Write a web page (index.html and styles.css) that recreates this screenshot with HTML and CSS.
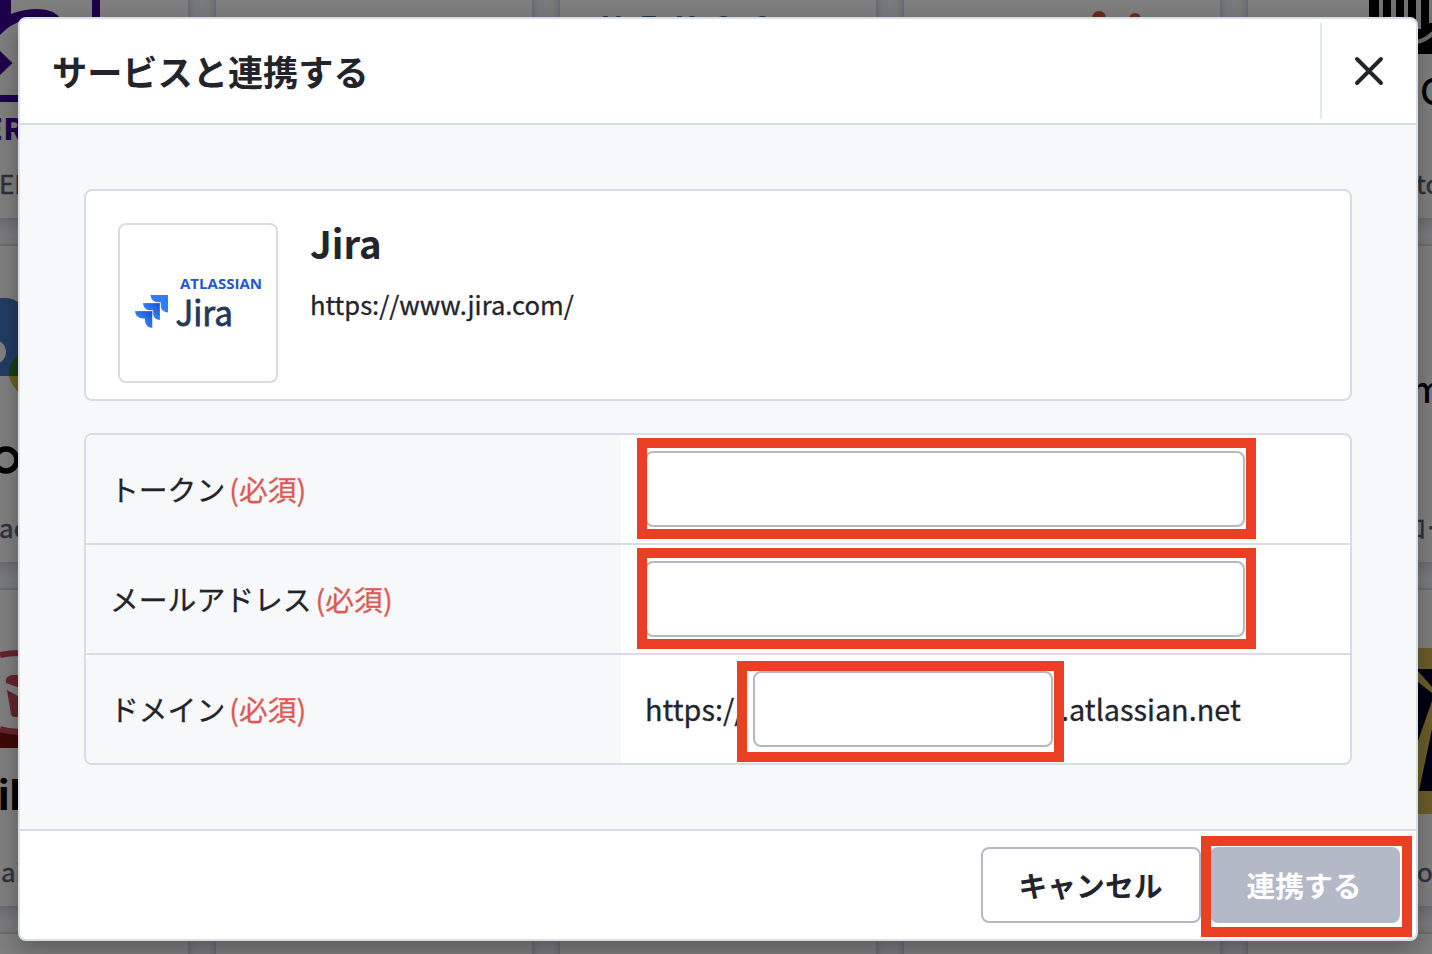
FILE: index.html
```html
<!DOCTYPE html>
<html lang="ja">
<head>
<meta charset="utf-8">
<title>サービスと連携する</title>
<link rel="stylesheet" href="styles.css">
</head>
<body>
<div class="catalog">
  <div class="catalog-grid">
    <div class="card"></div><div class="card"></div><div class="card"></div><div class="card"></div><div class="card"></div>
    <div class="card"></div><div class="card"></div><div class="card"></div><div class="card"></div><div class="card"></div>
    <div class="card"></div><div class="card"></div><div class="card"></div><div class="card"></div><div class="card"></div>
    <div class="card"></div><div class="card"></div><div class="card"></div><div class="card"></div><div class="card"></div>
  </div>
  <svg class="catalog-art" width="1432" height="954" viewBox="0 0 1432 954">
    <g fill="#3c0096">
      <path d="M92 0h8v20h-8zM0 95h20v7H0zM0 0h11v14Q24 9 38 9Q54 9 62 20H24Q10 24 0 35zM0 51L12.500 63L0 75z"/>
      <text x="-16" y="140" font-size="30" font-weight="800" letter-spacing="2" class="latin">ER</text>
    </g>
    <text x="-1" y="194" font-size="26" class="caption">EF</text>
    <path d="M-20 298H6q8 0 14 6v72H-20z" fill="#4479c5"/>
    <circle cx="-6" cy="352" r="12" fill="#fff"/>
    <path d="M20 354Q9 360 9 376h11z" fill="#2c7c35"/>
    <path d="M9 376h11v18Q11 385 9 376z" fill="#d9bd3c"/>
    <circle cx="6" cy="460" r="11" fill="none" stroke="#000" stroke-width="5.500"/>
    <text x="-1" y="538" font-size="26" class="caption">ac</text>
    <path d="M0 729q11 3 20 4v15H0z" fill="#771407"/>
    <path d="M0 655q9-2 20-2M0 729q10 3 20 3" stroke="#c94858" stroke-width="6" fill="none"/>
    <path d="M20 675h-8q-8 2-6 8l14 5zM7 690l13 7v20h-5q-3 0-4-3z" fill="#c94858"/>
    <text x="-2" y="810" font-size="42" font-weight="700" class="latin">il</text>
    <text x="1" y="882" font-size="26" class="caption">ai</text>
    <text x="601" y="37" font-size="28" font-weight="700" letter-spacing="18" fill="#426d86" class="latin">NEXGO</text>
    <circle cx="1099" cy="18" r="7" fill="#d6572e"/>
    <circle cx="1135" cy="19" r="6" fill="#d6572e"/>
    <path d="M1369 0h63v54h-63z" fill="#000"/>
    <path d="M1379 0h4v30h-4zM1391 0h5v30h-5zM1404 0h4v30h-4zM1416 0h5v29h-5zM1429 0h3v23h-3z" fill="#e8e8e8"/>
    <path d="M1417 42q9-2 16-9" stroke="#ddd" stroke-width="4" fill="none"/>
    <text x="1420" y="105" font-size="37" font-weight="500" class="latin">C</text>
    <text x="1416" y="194" font-size="26" class="caption">to</text>
    <text x="1411" y="403" font-size="36" font-weight="500" class="latin">m</text>
    <text x="1401" y="538" font-size="26" class="caption">ロード</text>
    <path d="M1416 648h16v166h-16z" fill="#d9bd52"/>
    <path d="M1416 669h16v122h-16z" fill="#000026"/>
    <path d="M1418 671l14 16v6l-14-11zM1418 741l14-40v28l-13 62h-1z" fill="#d9bd52"/>
    <text x="1417" y="882" font-size="26" class="caption">o</text>
  </svg>
</div>
<div class="overlay">
  <section class="dialog">
    <header class="dialog-header">
      <h1 class="dialog-title">サービスと連携する</h1>
      <button class="close" aria-label="閉じる">
        <svg width="32" height="32" viewBox="0 0 32 32"><path d="M4 4L28 28M28 4L4 28" stroke="#23242b" stroke-width="3.900" stroke-linecap="round"/></svg>
      </button>
    </header>
    <main class="dialog-body">
      <div class="service">
        <div class="logo">
          <svg width="156" height="156" viewBox="0 0 156 156">
            <defs>
              <linearGradient id="fold" x1="1" y1="0" x2="0.400" y2="0.600"><stop offset="0.100" stop-color="#1d51c8"/><stop offset="1" stop-color="#2f80fa"/></linearGradient>
            </defs>
            <path d="M30.500 70H48v17.500Q40.500 87 40.500 79.500V77.500H38Q31 77 30.500 70z" fill="#2f7dfa"/>
            <path d="M23 78H40V95Q33 94 32.500 87.500V85.500H30Q23.500 85 23 78z" fill="url(#fold)"/>
            <path d="M15 86H32.500V103Q25 102 25 95.500V93.500H22.500Q15.500 93 15 86z" fill="url(#fold)"/>
            <path d="M22.700 77.700H40.300V95M14.700 85.700H32.800V103" fill="none" stroke="#fff" stroke-width="0.700"/>
            <text x="60" y="64" font-size="14" font-weight="700" fill="#2358ce" textLength="82" lengthAdjust="spacingAndGlyphs" class="brand">ATLASSIAN</text>
            <text x="55.500" y="100.500" font-size="35" fill="#253858" textLength="57.500" lengthAdjust="spacingAndGlyphs" class="wordmark">Jira</text>
          </svg>
        </div>
        <div class="service-info">
          <h2 class="service-name">Jira</h2>
          <p class="service-url">https://www.jira.com/</p>
        </div>
      </div>
      <div class="form">
        <div class="row">
          <div class="label">トークン<span class="required">(必須)</span></div>
          <div class="field"><div class="marked"><input class="input"><i class="mark"></i></div></div>
        </div>
        <div class="row">
          <div class="label">メールアドレス<span class="required">(必須)</span></div>
          <div class="field"><div class="marked"><input class="input"><i class="mark"></i></div></div>
        </div>
        <div class="row">
          <div class="label">ドメイン<span class="required">(必須)</span></div>
          <div class="field"><span class="prefix">https://</span><div class="marked"><input class="input input-short"><i class="mark mark-domain"></i></div><span class="suffix">.atlassian.net</span></div>
        </div>
      </div>
    </main>
    <footer class="dialog-footer">
      <button class="button">キャンセル</button>
      <div class="marked"><button class="button button-primary">連携する</button><i class="mark mark-submit"></i></div>
    </footer>
  </section>
</div>
</body>
</html>
```
FILE: styles.css
```css
* { box-sizing: border-box; }
body {
  margin: 0;
  width: 1432px;
  height: 954px;
  overflow: hidden;
  position: relative;
  background: #f7f8fa;
  color: #23242b;
  font-family: "Noto Sans CJK JP", sans-serif;
}
h1, h2, p { margin: 0; }
button, input { font: inherit; color: inherit; margin: 0; outline: none; }

.catalog { position: absolute; inset: 0; overflow: hidden; }
.catalog-grid {
  display: grid;
  grid-template-columns: repeat(5, 320px);
  grid-auto-rows: 320px;
  gap: 24px;
  margin: -100px 0 0 -130px;
}
.card {
  background: #fff;
  border: 2px solid #d6dae5;
  border-radius: 8px;
  box-shadow: 0 4px 12px rgba(70, 80, 120, .18);
}
.catalog-art { position: absolute; inset: 0; }
.latin { font-family: Inter, sans-serif; }
.caption { fill: #5d6576; stroke: #5d6576; stroke-width: .5px; }

.overlay {
  position: absolute;
  inset: 0;
  padding: 17px 14px 13px 18px;
  background: rgba(0, 0, 0, .5);
}
.dialog {
  display: flex;
  flex-direction: column;
  height: 924px;
  border: 2px solid #d8dde6;
  border-radius: 8px;
  background: #fff;
  box-shadow: 0 8px 24px rgba(0, 0, 0, .3);
}
.dialog-header {
  display: flex;
  align-items: center;
  height: 106px;
  padding-left: 32px;
  border-bottom: 2px solid #d8dce6;
}
.dialog-title { flex: 1; font-size: 35.200px; line-height: 52px; font-weight: 700; }
.close {
  display: flex;
  align-items: center;
  justify-content: center;
  width: 96px;
  height: 96px;
  padding: 0;
  border: 0;
  border-left: 2px solid #e4e8ef;
  background: none;
}
.dialog-body {
  display: flex;
  flex-direction: column;
  gap: 32px;
  height: 704px;
  padding: 64px;
  background: #f7f8fa;
}
.service {
  display: flex;
  gap: 32px;
  height: 212px;
  padding: 32px;
  border: 2px solid #d8dce6;
  border-radius: 8px;
  background: #fff;
}
.logo { width: 160px; height: 160px; border: 2px solid #d8dce6; border-radius: 8px; }
.logo svg { display: block; }
.brand { font-family: "Open Sans", sans-serif; }
.wordmark { font-family: "Noto Sans CJK JP", sans-serif; stroke: #253858; stroke-width: .8px; }
.service-name { font-size: 38.400px; line-height: 38px; font-weight: 700; }
.service-url { margin-top: 22px; font-size: 25.600px; line-height: 42px; -webkit-text-stroke: .3px; }

.form {
  height: 332px;
  border: 2px solid #d8dce6;
  border-radius: 8px;
  background: #fff;
}
.row { display: flex; height: 110px; border-bottom: 2px solid #d8dce6; }
.row:last-child { height: 108px; border: 0; }
.label {
  display: flex;
  align-items: center;
  gap: 4px;
  width: 535px;
  padding: 0 0 2px 24px;
  background: #f7f8fa;
  border-radius: 6px 0 0 6px;
  font-size: 28.800px;
  -webkit-text-stroke: .3px;
}
.required { color: #dc5a55; }
.field { display: flex; align-items: center; flex: 1; padding-left: 24px; font-size: 28.800px; }
.marked { position: relative; display: flex; }
.input {
  width: 600px;
  height: 76px;
  border: 2px solid #b3b9c7;
  border-radius: 8px;
  background: #fff;
}
.input-short { width: 300px; }
.prefix, .suffix { padding-bottom: 2px; -webkit-text-stroke: .3px; }
.prefix { width: 108px; }
.suffix { margin-left: 8px; }
.mark { position: absolute; inset: -13px -11px -12px -8px; border: 10px solid #ea3f25; }
.mark-domain { inset: -10px -11px -15px -16px; }
.mark-submit { inset: -11px -12px -14px -9px; }

.dialog-footer {
  display: flex;
  justify-content: flex-end;
  align-items: center;
  gap: 9px;
  height: 110px;
  padding-right: 16px;
  border-top: 2px solid #d8dce6;
}
.button {
  width: 220px;
  height: 76px;
  padding: 0 1px 2px 0;
  border: 2px solid #b3b9c7;
  border-radius: 8px;
  background: #fff;
  font-size: 28.800px;
  font-weight: 700;
}
.button-primary { width: 190px; padding-right: 2px; background: #b3b9c7; color: #fff; }
```
